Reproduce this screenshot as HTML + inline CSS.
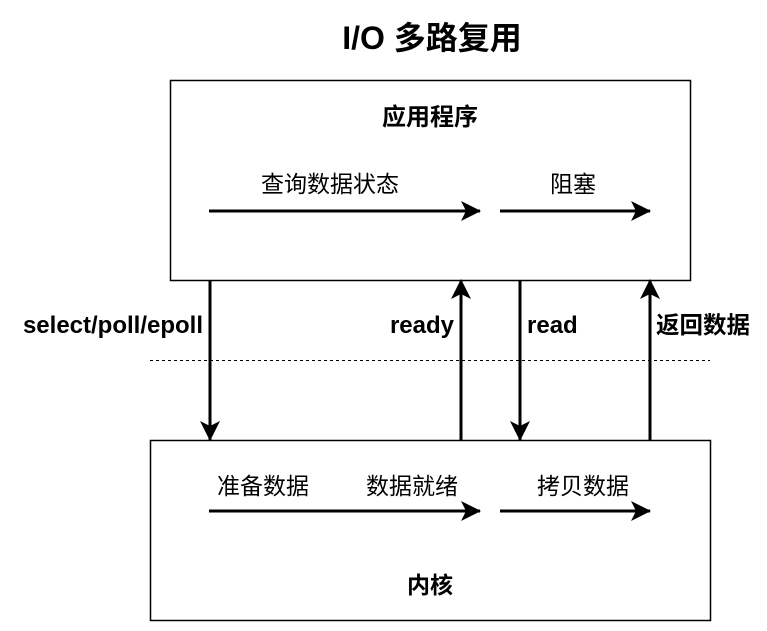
<!DOCTYPE html>
<html><head><meta charset="utf-8"><style>
html,body{margin:0;padding:0;background:#fff;}
svg{display:block;}
text{font-family:"Liberation Sans","Noto Sans CJK SC",sans-serif;fill:#000;}
.b{font-weight:bold;}
</style></head><body>
<svg width="767" height="631" viewBox="0 0 767 631" xmlns="http://www.w3.org/2000/svg">
<defs>
<marker id="a" viewBox="0 0 20 20" refX="19" refY="10" markerUnits="userSpaceOnUse" markerWidth="20" markerHeight="20" orient="auto">
<path d="M0,0 L20,10 L0,20 L5,10 Z" fill="#000"/>
</marker>
</defs>
<text x="432" y="49" text-anchor="middle" class="b" font-size="32">I/O 多路复用</text>
<rect x="170.5" y="80.5" width="520" height="200" fill="none" stroke="#000" stroke-width="1.5"/>
<rect x="150.5" y="440.5" width="560" height="180" fill="none" stroke="#000" stroke-width="1.5"/>
<line x1="150" y1="360.5" x2="710" y2="360.5" stroke="#000" stroke-width="1" stroke-dasharray="3,3"/>
<text x="430" y="125" text-anchor="middle" class="b" font-size="24">应用程序</text>
<text x="330" y="192" text-anchor="middle" font-size="23">查询数据状态</text>
<text x="573" y="192" text-anchor="middle" font-size="23">阻塞</text>
<line x1="209" y1="211" x2="480" y2="211" stroke="#000" stroke-width="3" marker-end="url(#a)"/>
<line x1="500" y1="211" x2="650" y2="211" stroke="#000" stroke-width="3" marker-end="url(#a)"/>
<line x1="210" y1="280" x2="210" y2="440" stroke="#000" stroke-width="3" marker-end="url(#a)"/>
<line x1="461" y1="440" x2="461" y2="280" stroke="#000" stroke-width="3" marker-end="url(#a)"/>
<line x1="520" y1="280" x2="520" y2="440" stroke="#000" stroke-width="3" marker-end="url(#a)"/>
<line x1="650" y1="440" x2="650" y2="280" stroke="#000" stroke-width="3" marker-end="url(#a)"/>
<text x="203" y="333" text-anchor="end" class="b" font-size="24">select/poll/epoll</text>
<text x="454" y="333" text-anchor="end" class="b" font-size="24">ready</text>
<text x="527" y="333" class="b" font-size="24">read</text>
<text x="656" y="333" class="b" font-size="23.5">返回数据</text>
<text x="263" y="494" text-anchor="middle" font-size="23">准备数据</text>
<text x="412" y="494" text-anchor="middle" font-size="23">数据就绪</text>
<text x="583" y="494" text-anchor="middle" font-size="23">拷贝数据</text>
<line x1="209" y1="511" x2="480" y2="511" stroke="#000" stroke-width="3" marker-end="url(#a)"/>
<line x1="500" y1="511" x2="650" y2="511" stroke="#000" stroke-width="3" marker-end="url(#a)"/>
<text x="430" y="593" text-anchor="middle" class="b" font-size="23">内核</text>
</svg>
</body></html>
